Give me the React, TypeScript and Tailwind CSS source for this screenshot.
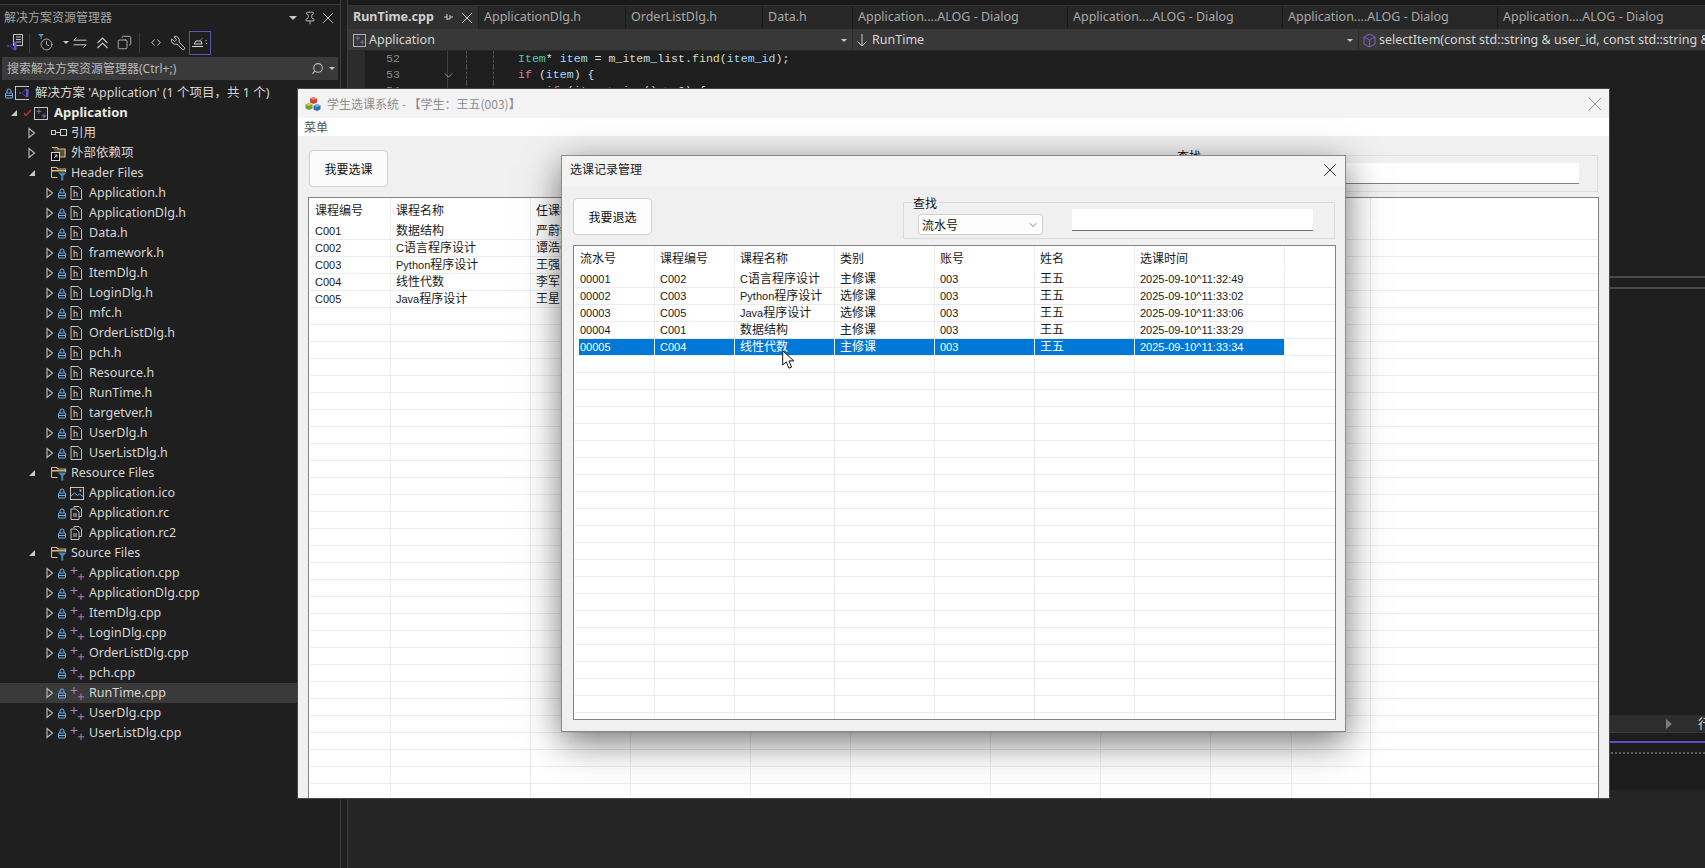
import { ChevronDown, Clock, Copy, Pin, Search, Wrench, X } from "lucide-react";
import React from "react";

type TreeRow = { kind: "ref" | "ext" | "folder" | "h" | "res" | "ico" | "cpp"; label: string; leaf?: boolean };

const treeRows: TreeRow[] = [
  { kind: "ref", label: "引用" },
  { kind: "ext", label: "外部依赖项" },
  { kind: "folder", label: "Header Files" },
  { kind: "h", label: "Application.h" },
  { kind: "h", label: "ApplicationDlg.h" },
  { kind: "h", label: "Data.h" },
  { kind: "h", label: "framework.h" },
  { kind: "h", label: "ItemDlg.h" },
  { kind: "h", label: "LoginDlg.h" },
  { kind: "h", label: "mfc.h" },
  { kind: "h", label: "OrderListDlg.h" },
  { kind: "h", label: "pch.h" },
  { kind: "h", label: "Resource.h" },
  { kind: "h", label: "RunTime.h" },
  { kind: "h", label: "targetver.h", leaf: true },
  { kind: "h", label: "UserDlg.h" },
  { kind: "h", label: "UserListDlg.h" },
  { kind: "folder", label: "Resource Files" },
  { kind: "ico", label: "Application.ico", leaf: true },
  { kind: "res", label: "Application.rc", leaf: true },
  { kind: "res", label: "Application.rc2", leaf: true },
  { kind: "folder", label: "Source Files" },
  { kind: "cpp", label: "Application.cpp" },
  { kind: "cpp", label: "ApplicationDlg.cpp" },
  { kind: "cpp", label: "ItemDlg.cpp" },
  { kind: "cpp", label: "LoginDlg.cpp" },
  { kind: "cpp", label: "OrderListDlg.cpp" },
  { kind: "cpp", label: "pch.cpp", leaf: true },
  { kind: "cpp", label: "RunTime.cpp" },
  { kind: "cpp", label: "UserDlg.cpp" },
  { kind: "cpp", label: "UserListDlg.cpp" },
];

const tabs = [
  { label: "ApplicationDlg.h", cls: "w-[147px]" },
  { label: "OrderListDlg.h", cls: "w-[137px]" },
  { label: "Data.h", cls: "w-[90px]" },
  { label: "Application....ALOG - Dialog", cls: "w-[215px]" },
  { label: "Application....ALOG - Dialog", cls: "w-[215px]" },
  { label: "Application....ALOG - Dialog", cls: "w-[215px]" },
  { label: "Application....ALOG - Dialog", cls: "w-[215px]" },
];

const mainWidths = [82, 140, 100, 120, 100, 140, 110, 110, 81, 79];
const mainHeader = ["课程编号", "课程名称", "任课教师"];
const mainRows = [
  ["C001", "数据结构", "严蔚敏"],
  ["C002", "C语言程序设计", "谭浩强"],
  ["C003", "Python程序设计", "王强"],
  ["C004", "线性代数", "李军"],
  ["C005", "Java程序设计", "王星"],
];

const dialogWidths = [81, 80, 100, 100, 100, 100, 150];
const dialogHeader = ["流水号", "课程编号", "课程名称", "类别", "账号", "姓名", "选课时间"];
const dialogRows = [
  ["00001", "C002", "C语言程序设计", "主修课", "003", "王五", "2025-09-10^11:32:49"],
  ["00002", "C003", "Python程序设计", "选修课", "003", "王五", "2025-09-10^11:33:02"],
  ["00003", "C005", "Java程序设计", "选修课", "003", "王五", "2025-09-10^11:33:06"],
  ["00004", "C001", "数据结构", "主修课", "003", "王五", "2025-09-10^11:33:29"],
  ["00005", "C004", "线性代数", "主修课", "003", "王五", "2025-09-10^11:33:34"],
];

function ArrowOpen() {
  return (
    <svg width="10" height="12" viewBox="0 0 10 12" className="shrink-0">
      <polygon points="2,1.5 7.5,6 2,10.5" fill="none" stroke="#b4b4b4" strokeWidth="1.2" />
    </svg>
  );
}

function ArrowDown() {
  return (
    <svg width="10" height="12" viewBox="0 0 10 12" className="shrink-0">
      <polygon points="8,3 8,9 2,9" fill="#c8c8c8" />
    </svg>
  );
}

function Lock({ className = "" }: { className?: string }) {
  return (
    <svg width="8" height="11" viewBox="0 0 8 11" className={`shrink-0 ${className}`}>
      <path d="M2 5V3a2 2 0 0 1 4 0V5" fill="none" stroke="#6cb0e8" strokeWidth="1" />
      <rect x=".5" y="5" width="7" height="5" rx=".5" fill="none" stroke="#6cb0e8" strokeWidth="1" />
      <line x1="1" y1="7.5" x2="7" y2="7.5" stroke="#6cb0e8" strokeWidth="1" />
    </svg>
  );
}

function HFile() {
  return (
    <svg width="12" height="14" viewBox="0 0 12 14" className="shrink-0">
      <path d="M1 .5h7l3.5 3V13.5H1z" fill="#1f1f1f" stroke="#c4c4c4" strokeWidth="1" />
      <text x="3" y="11" fontSize="9" fill="#d0d0d0" fontFamily="Liberation Sans">h</text>
    </svg>
  );
}

function CppFile({ size = 15 }: { size?: number }) {
  return (
    <svg width={size} height={size} viewBox="0 0 15 15" className="shrink-0">
      <path d="M4 1v7M.5 4.5h7" stroke="#a97ec4" strokeWidth="1" />
      <path d="M11 7.5v6.5M7.8 10.8h6.4" stroke="#a97ec4" strokeWidth="1" />
    </svg>
  );
}

function ResFile() {
  return (
    <svg width="12" height="14" viewBox="0 0 12 14" className="shrink-0">
      <path d="M4 2V.5h5l2.5 2.5v7.5H9" fill="none" stroke="#c4c4c4" strokeWidth="1" />
      <path d="M1 3h5l3 3v7.5H1z" fill="#1f1f1f" stroke="#c4c4c4" strokeWidth="1" />
      <path d="M3 8h4M3 10h4" stroke="#c4c4c4" strokeWidth="1" />
    </svg>
  );
}

function IcoFile() {
  return (
    <svg width="14" height="13" viewBox="0 0 14 13" className="shrink-0">
      <rect x=".5" y=".5" width="13" height="12" fill="none" stroke="#c4c4c4" strokeWidth="1" />
      <path d="M1 9l3.5-3 3 2.5 2-1.5 3.5 2.5" fill="none" stroke="#6cb0e8" strokeWidth="1" />
      <rect x="9.5" y="2.5" width="2" height="2" fill="#e0b060" />
    </svg>
  );
}

function FilterFolder() {
  return (
    <svg width="16" height="15" viewBox="0 0 16 15" className="shrink-0">
      <path d="M.5 11.5V1.5h5l1.5 1.5h7.5v3M.5 11.5h6" fill="none" stroke="#dcb67a" strokeWidth="1.2" />
      <rect x="1" y="4" width="13" height="1.5" fill="#dcb67a" />
      <polygon points="7,6.5 15.5,6.5 12.3,10 12.3,14.5 10.2,14.5 10.2,10" fill="#3c87bd" />
    </svg>
  );
}

function ExtFolder() {
  return (
    <svg width="16" height="15" viewBox="0 0 16 15" className="shrink-0">
      <path d="M1 1.5h5l1.5 1.5H14v8H8" fill="#c9a86a" fillOpacity=".35" stroke="#dcb67a" strokeWidth="1.2" />
      <rect x=".5" y="6.5" width="8" height="8" fill="#000" stroke="#d4d4d4" strokeWidth="1" />
      <path d="M3 12l3-3M3.5 9H6v2.5" fill="none" stroke="#d4d4d4" strokeWidth="1" />
    </svg>
  );
}

function RefIcon() {
  return (
    <svg width="16" height="8" viewBox="0 0 16 8" className="shrink-0">
      <rect x=".5" y="1.5" width="4" height="4" fill="none" stroke="#d0d0d0" strokeWidth="1" />
      <path d="M4.5 3.5h5" stroke="#d0d0d0" strokeWidth="1" />
      <rect x="9.5" y=".5" width="6" height="6" fill="none" stroke="#d0d0d0" strokeWidth="1" />
    </svg>
  );
}

function VsMark({ className = "" }: { className?: string }) {
  return (
    <svg width="10" height="10" viewBox="0 0 10 10" className={className}>
      <path d="M.5 3.5l2 1.5-2 1.5zM2.5 5l5-4.5 2 1v7l-2 1z M3 5l4 3V2z" fill="#6a4fc8" fillRule="evenodd" />
    </svg>
  );
}

function AppCubes() {
  return (
    <svg width="16" height="16" viewBox="0 0 16 16" className="shrink-0">
      <path d="M8.5 1l3.5 1.5v4L8.5 8 5 6.5v-4z" fill="#c9463f" />
      <path d="M8.5 1l3.5 1.5-3.5 1.5L5 2.5z" fill="#e88a78" />
      <path d="M4 7l3.5 1.5v4L4 14 .5 12.5v-4z" fill="#6f9e3c" />
      <path d="M4 7l3.5 1.5L4 10 .5 8.5z" fill="#e6c04f" />
      <path d="M12 8l3.5 1.5v4L12 15l-3.5-1.5v-4z" fill="#2f6fb5" />
      <path d="M12 8l3.5 1.5L12 11 8.5 9.5z" fill="#7fb4e4" />
    </svg>
  );
}

function SidebarToolbar() {
  return (
    <div className="h-[27px] flex items-center pl-[7px] text-[#c8c8c8]">
      <div className="relative w-[16px] h-[17px] shrink-0">
        <svg width="10" height="12" viewBox="0 0 10 12" className="absolute right-0 top-0">
          <path d="M.5.5h9v11h-9z" fill="none" stroke="#c8c8c8" />
          <path d="M3 3h5M3 5.5h5M3 8h5" stroke="#c8c8c8" />
        </svg>
        <VsMark className="absolute left-0 bottom-0" />
      </div>
      <div className="w-px h-[20px] bg-[#3c3c3c] ml-[6px] shrink-0" />
      <div className="relative ml-[8px] w-[16px] h-[17px] shrink-0">
        <Clock size={13} strokeWidth={1.5} className="absolute left-[2px] top-[4px]" />
        <svg width="6" height="5" viewBox="0 0 6 5" className="absolute left-0 top-0">
          <path d="M0 0h6L3.5 2.5V5h-1V2.5z" fill="#4a9ad4" />
        </svg>
      </div>
      <svg width="6" height="3" viewBox="0 0 6 3" className="ml-[9px] shrink-0"><polygon points="0,0 6,0 3,3" fill="#c8c8c8" /></svg>
      <svg width="14" height="11" viewBox="0 0 14 11" className="ml-[4px] shrink-0">
        <path d="M3.5.5L.8 3.2h12.7M10.5 10.5l2.7-2.7H.5" fill="none" stroke="#c8c8c8" strokeWidth="1" />
      </svg>
      <svg width="11" height="12" viewBox="0 0 11 12" className="ml-[10px] shrink-0">
        <path d="M.5 6L5.5 1l5 5M.5 11l5-5 5 5" fill="none" stroke="#c8c8c8" strokeWidth="1.1" />
      </svg>
      <Copy size={15} strokeWidth={1.3} className="ml-[9px] -scale-x-100 shrink-0" />
      <div className="w-px h-[20px] bg-[#3c3c3c] ml-[7px] shrink-0" />
      <svg width="10" height="7" viewBox="0 0 10 7" className="ml-[11px] shrink-0">
        <path d="M3.5.5L.8 3.5l2.7 3M6.5.5l2.7 3-2.7 3" fill="none" stroke="#c8c8c8" strokeWidth="1" />
      </svg>
      <Wrench size={16} strokeWidth={1.5} className="ml-[9px] -scale-x-100 shrink-0" />
      <div className="ml-[3px] w-[22px] h-[24px] border border-[#5a55b0] flex items-center justify-center shrink-0">
        <svg width="16" height="9" viewBox="0 0 16 9">
          <path d="M0 8.5h11M2 6h8l-1-3H4z" fill="none" stroke="#d8d8d8" strokeWidth="1" />
          <path d="M9 1.5l1-1M13.5 2.5h1M14 5.5h1" stroke="#d8d8d8" strokeWidth="1" />
        </svg>
      </div>
    </div>
  );
}

function Sidebar() {
  return (
    <div className="w-[340px] h-full bg-[#1f1f1f] shrink-0 text-[12.5px] text-[#d6d6d6]">
      <div className="h-[24px] flex items-center pl-[4px] pr-[3px] pt-[1px]">
        <span className="text-[12px] text-[#a4a4a4] flex-1">解决方案资源管理器</span>
        <svg width="8" height="4" viewBox="0 0 8 4"><polygon points="0,0 8,0 4,4" fill="#c8c8c8" /></svg>
        <Pin size={14} strokeWidth={1.5} className="ml-[6px] text-[#c8c8c8]" />
        <X size={18} strokeWidth={1.3} className="ml-[2px] text-[#c8c8c8]" />
      </div>
      <SidebarToolbar />
      <div className="h-[23px] mx-[2px] mt-[1px] bg-[#3a3a3a] flex items-center pl-[5px] pr-[3px] text-[#b8b8b8] text-[12px]">
        <span className="flex-1">搜索解决方案资源管理器(Ctrl+;)</span>
        <Search size={13} strokeWidth={2} className="-scale-x-100" />
        <svg width="6" height="3" viewBox="0 0 6 3" className="ml-[5px]"><polygon points="0,0 6,0 3,3" fill="#c8c8c8" /></svg>
      </div>
      <div className="mt-[3px]">
        <div className="h-[20px] flex items-center pl-[5px]">
          <Lock />
          <div className="relative w-[14px] h-[14px] ml-[2px] shrink-0 border-l border-t border-b border-[#c4c4c4]">
            <VsMark className="absolute left-[3px] bottom-[1px]" />
          </div>
          <span className="ml-[6px]">解决方案 'Application' (1 个项目，共 1 个)</span>
        </div>
        <div className="h-[20px] flex items-center pl-[9px]">
          <ArrowDown />
          <svg width="9" height="8" viewBox="0 0 9 8" className="ml-[4px] shrink-0">
            <path d="M1 4l2 2.5L8 1" fill="none" stroke="#c0303c" strokeWidth="1.4" />
          </svg>
          <div className="ml-[2px] w-[14px] h-[13px] border border-[#c4c4c4] flex items-center justify-center shrink-0">
            <CppFile size={11} />
          </div>
          <span className="ml-[6px] font-bold text-[#e8e8e8] text-[13px]">Application</span>
        </div>
        {treeRows.map((r, i) => (
          <TreeItem key={i} row={r} />
        ))}
      </div>
    </div>
  );
}

function TreeItem({ row }: { row: TreeRow }) {
  if (row.kind === "ref" || row.kind === "ext" || row.kind === "folder") {
    return (
      <div className="h-[20px] flex items-center pl-[27px]">
        {row.kind === "folder" ? <ArrowDown /> : <ArrowOpen />}
        <div className="w-[16px] ml-[14px] flex justify-center shrink-0">
          {row.kind === "ref" ? <RefIcon /> : row.kind === "ext" ? <ExtFolder /> : <FilterFolder />}
        </div>
        <span className="ml-[4px]">{row.label}</span>
      </div>
    );
  }
  const selected = row.label === "RunTime.cpp";
  return (
    <div className={`h-[20px] flex items-center pl-[45px] ${selected ? "bg-[#3a3a3a]" : ""}`}>
      <div className="w-[10px] shrink-0">{row.leaf ? null : <ArrowOpen />}</div>
      <Lock className="ml-[3px]" />
      <div className="w-[15px] ml-[4px] flex justify-start shrink-0">
        {row.kind === "h" && <HFile />}
        {row.kind === "res" && <ResFile />}
        {row.kind === "ico" && <IcoFile />}
        {row.kind === "cpp" && <CppFile />}
      </div>
      <span className="ml-[4px]">{row.label}</span>
    </div>
  );
}

function CodeRow({ num, fold, children }: { num: number; fold?: boolean; children: React.ReactNode }) {
  return (
    <div className="h-[16px] flex relative">
      <div className="w-[17px] bg-[#2c2c2c]" />
      <div className="w-[83px] pl-[21px] border-r border-[#404040] text-[#8c8c8c] leading-[16px]">{num}</div>
      <div className="w-[19px] border-r border-dashed border-[#505050]" />
      <div className="w-[27px] border-r border-dashed border-[#505050]" />
      <div className="pl-[24px] whitespace-pre leading-[16px] text-[#dcdcdc]">{children}</div>
      {fold && <ChevronDown size={13} strokeWidth={1.5} className="absolute left-[94px] top-[2px] text-[#b0b0b0]" />}
    </div>
  );
}

function Editor() {
  return (
    <div className="flex-1 min-w-0 flex flex-col border-l border-[#3c3c3c]">
      <div className="h-[6px] bg-[#1a1a1a] border-b border-[#333]" />
      <div className="h-[23px] flex bg-[#1f1f1f] text-[12.5px]">
        <div className="w-[131px] bg-[#303030] flex items-center pl-[5px] border-r border-[#1f1f1f] shrink-0 text-[#d0d0d0]">
          <span className="font-bold flex-1">RunTime.cpp</span>
          <svg width="9" height="9" viewBox="0 0 9 9" className="mr-[5px]">
            <path d="M3 1v6M3 4H0M6 2v4H3M6 4h3" fill="none" stroke="#c8c8c8" strokeWidth="1" />
          </svg>
          <X size={18} strokeWidth={1.3} className="mr-[2px] text-[#d0d0d0]" />
        </div>
        {tabs.map((t, i) => (
          <div key={i} className={`${t.cls} shrink-0 bg-[#272727] border-r border-[#1a1a1a] pl-[5px] flex items-center text-[#a8a8a8] whitespace-nowrap`}>
            {t.label}
          </div>
        ))}
      </div>
      <div className="h-[22px] flex bg-[#333333] text-[12.5px] text-[#d6d6d6] border-b border-[#2a2a2a]">
        <div className="w-[505px] shrink-0 bg-[#383838] flex items-center pl-[5px] pr-[5px] pt-[1px] border-r border-[#2a2a2a]">
          <div className="w-[13px] h-[13px] border border-[#b0b0b0] flex items-center justify-center shrink-0">
            <CppFile size={10} />
          </div>
          <span className="ml-[3px] flex-1">Application</span>
          <svg width="6" height="3" viewBox="0 0 6 3"><polygon points="0,0 6,0 3,3" fill="#c8c8c8" /></svg>
        </div>
        <div className="w-[506px] shrink-0 bg-[#383838] flex items-center pl-[3px] pr-[5px] pt-[1px] border-r border-[#2a2a2a]">
          <svg width="12" height="14" viewBox="0 0 12 14"><path d="M6 1v12M1.5 8.5L6 13l4.5-4.5" fill="none" stroke="#c8c8c8" strokeWidth="1" /></svg>
          <span className="ml-[4px] flex-1">RunTime</span>
          <svg width="6" height="3" viewBox="0 0 6 3"><polygon points="0,0 6,0 3,3" fill="#c8c8c8" /></svg>
        </div>
        <div className="flex-1 min-w-0 bg-[#383838] flex items-center pl-[4px] pt-[1px] whitespace-nowrap overflow-hidden">
          <svg width="13" height="15" viewBox="0 0 13 15" className="shrink-0">
            <path d="M6.5 1L12 4v7l-5.5 3L1 11V4zM1 4l5.5 3L12 4M6.5 7v7" fill="none" stroke="#7b5fc0" strokeWidth="1" />
          </svg>
          <span className="ml-[3px]">selectItem(const std::string &amp; user_id, const std::string &amp;</span>
        </div>
      </div>
      <div className="h-[225px] bg-[#1e1e1e] font-['Liberation_Mono',monospace] text-[11.6px] overflow-hidden">
        <CodeRow num={52}>
          <span className="text-[#4ec9b0]">Item</span>* <span className="text-[#9cdcfe]">item</span> = m_item_list.<span className="text-[#dcdcaa]">find</span>(<span className="text-[#9cdcfe]">item_id</span>);
        </CodeRow>
        <CodeRow num={53} fold>
          <span className="text-[#c586c0]">if</span> (<span className="text-[#9cdcfe]">item</span>) {"{"}
        </CodeRow>
        <CodeRow num={54} fold>
          {"    "}<span className="text-[#c586c0]">if</span> (<span className="text-[#9cdcfe]">item</span>-&gt;size() &gt; 0) {"{"}
        </CodeRow>
      </div>
      <div className="h-[13px] bg-[#1e1e1e] border-y-2 border-[#4a4a4a]" />
      <div className="flex-1 bg-[#1e1e1e]" />
      <div className="h-[18px] bg-[#2d2d2d] flex items-center justify-end overflow-hidden border-b border-[#3a3a3a]">
        <svg width="6" height="10" viewBox="0 0 6 10"><polygon points="0,0 6,5 0,10" fill="#7a7a7a" /></svg>
        <span className="ml-[26px] -mr-[6px] text-[13px] text-[#d0d0d0]">行</span>
      </div>
      <div className="h-[57px] bg-[#1d1d1d]">
        <div className="mt-[8px] h-[2px] bg-[#5a50c0]" />
        <div className="mt-[9px] border-t-2 border-dotted border-[#5e5e5e]" />
      </div>
      <div className="h-[78px] bg-[#252525]" />
    </div>
  );
}

function Cell({ text }: { text: string }) {
  const parts = text.split(/([\x00-\x7f]+)/).filter(Boolean);
  return (
    <span className="whitespace-nowrap text-[12px]">
      {parts.map((p, i) =>
        /^[\x00-\x7f]/.test(p) ? (
          <span key={i} className="text-[11px]">{p}</span>
        ) : (
          <span key={i}>{p}</span>
        )
      )}
    </span>
  );
}

function ListView({ widths, header, rows, total, selected }: {
  widths: number[];
  header: string[];
  rows: string[][];
  total: number;
  selected?: number;
}) {
  return (
    <div className="h-full bg-white overflow-hidden font-['Liberation_Sans','Noto_Sans_CJK_SC',sans-serif] text-[#1a1a1a]">
      <div className="h-[25px] flex">
        {widths.map((w, i) => (
          <div key={i} style={{ width: w }} className={`shrink-0 border-r border-[#ededed] pt-[2px] flex items-center h-[24px] ${i === 0 ? "pl-[6px]" : "pl-[5px]"}`}>
            <span className="text-[12px] whitespace-nowrap">{header[i] ?? ""}</span>
          </div>
        ))}
      </div>
      {Array.from({ length: total }).map((_, r) => {
        const row = rows[r];
        const isSel = selected === r;
        return (
          <div key={r} className="h-[17px] flex border-b border-[#ececec] ml-[1px]">
            {widths.map((w, c) => (
              <div
                key={c}
                style={{ width: c === 0 ? (isSel ? w - 5 : w - 1) : w }}
                className={`shrink-0 border-r flex items-center overflow-hidden ${isSel ? "bg-[#0078d7] text-white border-[#e8f2fb]" : "border-[#ececec]"} ${c === 0 ? (isSel ? "ml-[4px] pl-[1px]" : "pl-[5px]") : "pl-[5px]"}`}
              >
                {row && row[c] ? <Cell text={row[c]} /> : null}
              </div>
            ))}
          </div>
        );
      })}
    </div>
  );
}

function GroupLabel({ className }: { className: string }) {
  return <span className={`absolute px-[1px] bg-[#f0f0f0] text-[12px] text-[#111] leading-[14px] ${className}`}>查找</span>;
}

function ClassDialog() {
  return (
    <div className="absolute left-[263px] top-[66px] w-[785px] h-[577px] flex flex-col bg-[#f0f0f0] border border-[#8a8a8a] shadow-[0_10px_34px_rgba(0,0,0,0.55)] text-[#111]">
      <div className="h-[31px] bg-[#f3f3f3] flex items-start pt-[4px] pl-[8px] pr-[4px] shrink-0">
        <span className="text-[12px] flex-1 text-[#222]">选课记录管理</span>
        <X size={22} strokeWidth={1} className="text-[#222] -mt-[1px]" />
      </div>
      <div className="h-[58px] pt-[11px] pl-[11px] pr-[10px] flex items-start shrink-0">
        <button className="w-[79px] h-[37px] bg-[#fdfdfd] border border-[#d0d0d0] rounded-[4px] text-[12px]">我要退选</button>
        <div className="ml-auto relative mt-[4px] w-[432px] h-[37px] border border-[#dcdcdc] flex items-start pl-[14px]">
          <GroupLabel className="left-[8px] -top-[7px]" />
          <div className="mt-[11px] w-[125px] h-[21px] bg-[#fdfdfd] border border-[#cfcfcf] rounded-[3px] flex items-center pl-[3px] pr-[3px] text-[12px]">
            <span className="flex-1">流水号</span>
            <ChevronDown size={12} strokeWidth={1.3} className="text-[#444]" />
          </div>
          <div className="mt-[6px] ml-[29px] w-[241px] h-[22px] bg-white border-b border-[#707070]" />
        </div>
      </div>
      <div className="flex-1 min-h-0 mb-[11px] ml-[11px] mr-[9px] border border-[#828282] overflow-hidden">
        <ListView widths={dialogWidths} header={dialogHeader} rows={dialogRows} total={28} selected={4} />
      </div>
      <svg width="13" height="20" viewBox="0 0 13 20" className="absolute left-[220px] top-[194px]">
        <path d="M.7.7V15l3.6-3.2 2.6 6.4 2.7-1.1-2.7-6.2h4.9z" fill="#fff" stroke="#111" strokeWidth="1" />
      </svg>
    </div>
  );
}

function MainWindow() {
  return (
    <div className="absolute left-[297px] top-[88px] w-[1313px] h-[711px] flex flex-col overflow-hidden bg-[#f0f0f0] border border-[#474747] text-[#111] font-['Noto_Sans_CJK_SC',sans-serif]">
      <div className="h-[29px] bg-[#f3f3f3] flex items-center pl-[7px] pr-[2px] shrink-0">
        <AppCubes />
        <span className="ml-[6px] flex-1 text-[12px] text-[#8d8d8d]">学生选课系统 - 【学生：王五(003)】</span>
        <X size={24} strokeWidth={0.9} className="text-[#8a8a8a]" />
      </div>
      <div className="h-[18px] bg-white flex items-center pl-[6px] text-[12px] text-[#555] shrink-0">菜单</div>
      <div className="flex-1 min-h-0 flex flex-col relative">
        <div className="h-[61px] pt-[14px] px-[11px] flex items-start shrink-0">
          <button className="w-[79px] h-[37px] bg-[#fbfbfb] border border-[#d0d0d0] rounded-[4px] text-[12px]">我要选课</button>
          <div className="ml-auto mt-[5px] relative w-[431px] h-[37px] border border-[#dedede] pr-[18px] pt-[7px] flex justify-end">
            <GroupLabel className="left-[8px] -top-[7px]" />
            <div className="w-[400px] h-[21px] bg-white border-b border-[#808080]" />
          </div>
        </div>
        <div className="flex-1 min-h-0 mx-[10px] border-t border-x border-[#828282]">
          <ListView widths={mainWidths} header={mainHeader} rows={mainRows} total={36} />
        </div>
      </div>
      <ClassDialog />
    </div>
  );
}

export default function App() {
  return (
    <div className="relative w-[1705px] h-[868px] overflow-hidden flex bg-[#1f1f1f] font-['Noto_Sans','Noto_Sans_CJK_SC',sans-serif]">
      <div className="w-[340px] h-full shrink-0 flex flex-col">
        <div className="h-[5px] bg-[#1a1a1a] border-b border-[#3a3a3a] shrink-0" />
        <div className="flex-1 min-h-0"><Sidebar /></div>
      </div>
      <div className="w-[7px] h-full border-l border-[#3c3c3c] bg-[#1f1f1f] shrink-0" />
      <Editor />
      <MainWindow />
    </div>
  );
}
